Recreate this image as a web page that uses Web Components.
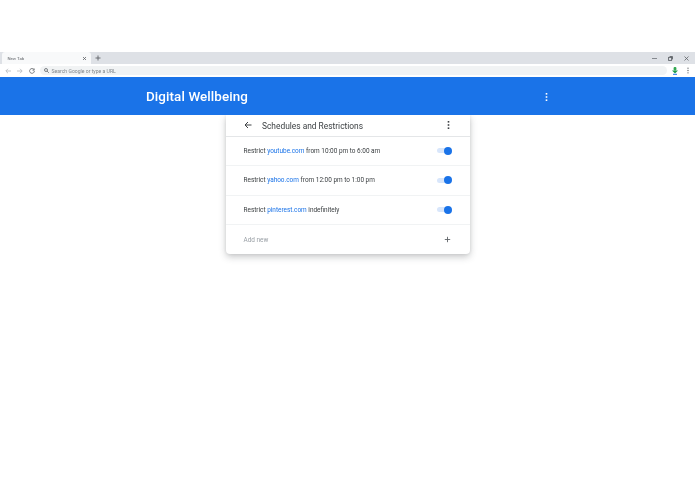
<!DOCTYPE html>
<html><head><meta charset="utf-8"><style>
html,body{margin:0;padding:0;background:#fff;height:100%}
body{font-family:Roboto,"Liberation Sans",sans-serif;padding-top:52px;box-sizing:border-box;overflow:hidden;filter:blur(.35px)}
</style></head><body>
<browser-chrome></browser-chrome>
<app-bar title="Digital Wellbeing"></app-bar>
<main-area>
<schedule-card heading="Schedules and Restrictions">
<rule-row>Restrict <a>youtube.com</a> from 10:00 pm to 6:00 am</rule-row>
<rule-row>Restrict <a>yahoo.com</a> from 12:00 pm to 1:00 pm</rule-row>
<rule-row>Restrict <a>pinterest.com</a> indefinitely</rule-row>
<add-row></add-row>
</schedule-card>
</main-area>
<script>
const dots=(c,h=9)=>`<svg width="3" height="${h}" viewBox="0 0 3 9" fill="${c}"><rect x=".6" y="0" width="1.8" height="1.8"/><rect x=".6" y="3.6" width="1.8" height="1.8"/><rect x=".6" y="7.2" width="1.8" height="1.8"/></svg>`;
function def(n,html,init){customElements.define(n,class extends HTMLElement{constructor(){super();this.attachShadow({mode:'open'}).innerHTML=html;}connectedCallback(){init&&init(this)}})}
def('browser-chrome',`<style>
:host{display:block;font-family:Roboto,"Liberation Sans",sans-serif}
.strip{height:12px;background:#dee1e6;display:flex;align-items:center;}
.tab{width:89px;height:12px;margin-left:2px;background:#f8f9fa;border-radius:3px 3px 0 0;display:flex;align-items:center;box-sizing:border-box;padding:0 4.5px 0 5.5px;font-size:4.3px;color:#5f6368;justify-content:space-between}
.plus{margin-left:4px;display:flex}
.spacer{flex:1}
.win{display:flex;gap:11px;align-items:center;margin-right:6px}
.bar{height:13px;background:#fff;display:flex;align-items:center;box-sizing:border-box}
.nav{display:flex;gap:6px;align-items:center;margin-left:5px;width:34px}
.omni{width:627px;height:9.5px;border-radius:5px;background:#f1f3f4;display:flex;align-items:center;font-size:5.1px;color:#80868b;margin-left:1px;box-sizing:border-box;padding-left:3.5px;gap:3px}
.end{display:flex;align-items:center;gap:9px;margin-left:5px}
svg{display:block}
</style>
<div class="strip"><div class="tab"><span>New Tab</span><svg width="5" height="5" viewBox="0 0 5 5" stroke="#5f6368" stroke-width=".8"><path d="M1 1l3 3M4 1L1 4"/></svg></div>
<span class="plus"><svg width="6" height="6" viewBox="0 0 6 6" stroke="#5f6368" stroke-width=".9"><path d="M3 .5v5M.5 3h5"/></svg></span><span class="spacer"></span>
<div class="win"><svg width="5" height="5" viewBox="0 0 5 5" stroke="#5f6368" stroke-width=".7"><path d="M0 2.5h5"/></svg><svg width="5" height="5" viewBox="0 0 5 5" fill="none" stroke="#5f6368" stroke-width=".9"><rect x=".6" y="1.4" width="3" height="3"/><path d="M1.6 .5h2.9v2.9"/></svg><svg width="5" height="5" viewBox="0 0 5 5" stroke="#5f6368" stroke-width=".8"><path d="M.5.5l4 4M4.5.5l-4 4"/></svg></div></div>
<div class="bar"><div class="nav">
<svg width="6" height="6" viewBox="0 0 6 6" fill="none" stroke="#b4b7bb" stroke-width=".8"><path d="M6 3H1M3 .8L.8 3 3 5.2"/></svg>
<svg width="6" height="6" viewBox="0 0 6 6" fill="none" stroke="#b4b7bb" stroke-width=".8"><path d="M0 3h5M3 .8L5.2 3 3 5.2"/></svg>
<svg width="6" height="6" viewBox="0 0 6 6" fill="none" stroke="#5f6368" stroke-width=".8"><path d="M5 1.6A2.4 2.4 0 1 0 5.4 3"/><path d="M5.2.5v1.7H3.5" /></svg></div>
<div class="omni"><svg width="5" height="5" viewBox="0 0 5 5" fill="none" stroke="#5f6368" stroke-width=".8"><circle cx="2" cy="2" r="1.5"/><path d="M3.1 3.1L4.8 4.8"/></svg><span>Search Google or type a URL</span></div>
<div class="end"><svg width="6" height="8" viewBox="0 0 6 8"><rect x="1.6" y="0" width="2.8" height="3.6" rx="1" fill="#34a853"/><path d="M0 3.4h6L3 6.6z" fill="#1e9e4a"/><rect x="1" y="6.8" width="4" height="1" fill="#1a73e8"/></svg><svg width="2" height="7" viewBox="0 0 3 9" fill="#5f6368"><circle cx="1.5" cy="1" r="1"/><circle cx="1.5" cy="4.5" r="1"/><circle cx="1.5" cy="8" r="1"/></svg></div></div>`);
def('app-bar',`<style>
:host{display:flex;height:38px;background:#1a73e8;align-items:center;color:#fff;position:relative}
h1{margin:1px 0 0 146px;font:500 13.4px Roboto,"Liberation Sans",sans-serif;width:398.5px;letter-spacing:.1px}
svg{display:block;margin-top:2px}
</style><h1></h1>${dots('#fff',8)}`,e=>{e.shadowRoot.querySelector('h1').textContent=e.getAttribute('title')});
def('main-area',`<style>:host{display:flex;justify-content:center;padding-left:1px}</style><slot></slot>`);
def('schedule-card',`<style>
:host{display:block;width:244px;background:#fff;border-radius:0 0 4px 4px;box-shadow:0 3px 7px rgba(60,64,67,.28),0 0 3px rgba(60,64,67,.1);font-family:Roboto,"Liberation Sans",sans-serif}
header{height:20.5px;display:flex;align-items:center;border-bottom:1px solid #e4e6e8;color:#3c4043;font-size:8.4px;padding-right:20px;background:#fff}
.back{margin:0 10px 0 18px;display:block}
span{flex:1;padding-top:1px}
</style><header><svg class="back" width="8" height="8" viewBox="0 0 8 8" fill="none" stroke="#3c4043" stroke-width="1"><path d="M7.5 4H1M4 1L1 4l3 3"/></svg><span></span>${dots('#3c4043',8)}</header><slot></slot>`,e=>{e.shadowRoot.querySelector('span').textContent=e.getAttribute('heading')});
def('rule-row',`<style>
:host{display:flex;height:29.5px;box-sizing:border-box;align-items:center;padding:0 18px 0 17.5px;border-bottom:1px solid #f1f3f4;font-size:6.45px;color:#3c4043;justify-content:space-between}
::slotted(a){color:#1a73e8}
</style><div><slot></slot></div><toggle-switch></toggle-switch>`);
def('toggle-switch',`<style>
:host{display:block;width:15px;height:8px;position:relative}
.t{position:absolute;left:0;top:1.5px;width:13px;height:5px;border-radius:3px;background:#d8e6fb}
.k{position:absolute;right:0;top:0;width:8px;height:8px;border-radius:50%;background:#1a73e8}
</style><div class="t"></div><div class="k"></div>`);
def('add-row',`<style>
:host{display:flex;height:29px;align-items:center;padding:0 19.5px 0 17.5px;font-size:6.45px;color:#9aa0a6;justify-content:space-between}
svg{display:block}
</style><span>Add new</span><svg width="7" height="7" viewBox="0 0 7 7" stroke="#5f6368" stroke-width=".9"><path d="M3.5 .8v5.4M.8 3.5h5.4"/></svg>`);
</script>
</body></html>
